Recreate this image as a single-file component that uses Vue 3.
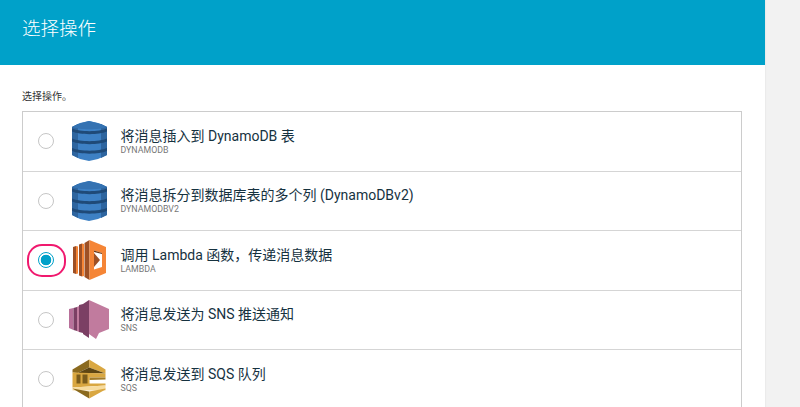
<script setup>
const rows = [
  { id: 'ddb', title: '将消息插入到 DynamoDB 表', sub: 'DYNAMODB', icon: 'ddb' },
  { id: 'ddb2', title: '将消息拆分到数据库表的多个列 (DynamoDBv2)', sub: 'DYNAMODBV2', icon: 'ddb' },
  { id: 'lambda', title: '调用 Lambda 函数，传递消息数据', sub: 'LAMBDA', icon: 'lambda', selected: true },
  { id: 'sns', title: '将消息发送为 SNS 推送通知', sub: 'SNS', icon: 'sns' },
  { id: 'sqs', title: '将消息发送到 SQS 队列', sub: 'SQS', icon: 'sqs' },
]
</script>

<template>
  <div class="page">
    <main class="panel">
      <header class="head">选择操作</header>
      <section class="body">
        <p class="hint">选择操作。</p>
        <div class="list">
          <div v-for="r in rows" :key="r.id" class="row">
            <span class="radio-wrap">
              <span class="radio" :class="{ on: r.selected }"></span>
              <span v-if="r.selected" class="ring"></span>
            </span>
            <svg class="icon" viewBox="0 0 36 40" aria-hidden="true">
              <template v-if="r.icon === 'ddb'">
                <path d="M1 6 L9 2 L18 0 L27 2 L36 6 V34 L27 38 L18 40 L9 38 L1 34Z" fill="#3d80c4"/>
                <path d="M1 6 L7 3 V37 L1 34Z" fill="#2e659f"/>
                <path d="M36 6 L30 3 V37 L36 34Z" fill="#2e659f"/>
                <path d="M7 3 L18 0 L30 3 L36 6 C28 9 9 9 1 6Z" fill="#3472b2"/>
                <path d="M1 7.5 C9 11 28 11 36 7.5 V10.5 C28 14 9 14 1 10.5Z" fill="#1f4a78"/>
                <path d="M1 17.5 C9 21 28 21 36 17.5 V20.5 C28 24 9 24 1 20.5Z" fill="#1f4a78"/>
                <path d="M1 27 C9 30.5 28 30.5 36 27 V30 C28 33.5 9 33.5 1 30Z" fill="#1f4a78"/>
              </template>
              <template v-else-if="r.icon === 'lambda'">
                <path d="M2 7 L5 6 V34 L2 33Z" fill="#9d5025"/>
                <path d="M5 6 L7 6.5 V33.5 L5 34Z" fill="#f58536"/>
                <path d="M8 4.5 L11 3.5 V36.5 L8 35.5Z" fill="#9d5025"/>
                <path d="M11 3.5 L13 4 V36 L11 36.5Z" fill="#f58536"/>
                <path d="M13.5 3 L18.5 0 V40 L13.5 37Z" fill="#9d5025"/>
                <path d="M18.5 0 L35 7 V33 L18.5 40Z" fill="#f58536"/>
                <path d="M23 10.5 L31 13 V27 L23 29.5Z" fill="#fff"/>
                <path d="M23 13 L29 20 L23 27Z" fill="#9d5025"/>
                <path d="M23 10.5 L31 13 V14 L23 12Z" fill="#6b3a19"/>
              </template>
              <template v-else-if="r.icon === 'sns'">
                <g transform="translate(-2 0)">
                  <path d="M0 9 L4.5 8 V30 L0 28Z" fill="#b8709a"/>
                  <path d="M4.5 8 L8 7 V31 L4.5 30Z" fill="#7b3f64"/>
                  <path d="M8 7 L10 6 V32 L8 31Z" fill="#c17b9e"/>
                  <path d="M10 5 L14 4 V33 L10 32Z" fill="#7b3f64"/>
                  <path d="M14 4 L20 0 V38 L14 34Z" fill="#7b3f64"/>
                  <path d="M20 0 L40 9 V29 L30 33 L27 39 L20 34Z" fill="#c17b9e"/>
                </g>
              </template>
              <template v-else>
                <g transform="translate(1.5 0.5)">
                  <path d="M0 10 L16.7 0 V8 L5 13.5 L0 13Z" fill="#8b6a1f"/>
                  <path d="M16.7 0 L33 10 V14 L16.7 8Z" fill="#d9a741"/>
                  <path d="M5 13.5 L16.7 8 L33 14 Z" fill="#5e4613"/>
                  <path d="M0 13 L33 14 V18 H17 V24 H33 V26 L0 28Z" fill="#d9a741"/>
                  <path d="M4 15 H8 V24 H4Z" fill="#7a5c1c"/>
                  <path d="M10 15 H15 V24 H10Z" fill="#7a5c1c"/>
                  <path d="M17 18 H33 V20 L17 20.5Z" fill="#a27c2a"/>
                  <path d="M0 28 L33 26 V31 L0 31Z" fill="#f7dc9f"/>
                  <path d="M0 29 L16.7 32 V39 Z" fill="#8b6a1f"/>
                  <path d="M16.7 32 L33 29 V30 L16.7 39Z" fill="#d9a741"/>
                </g>
              </template>
            </svg>
            <div class="txt">
              <div class="title">{{ r.title }}</div>
              <div class="sub">{{ r.sub }}</div>
            </div>
          </div>
        </div>
      </section>
    </main>
  </div>
</template>

<style scoped>
.page {
  width: 800px;
  height: 407px;
  overflow: hidden;
  background: #f2f2f2;
  font-family: Roboto, "Noto Sans CJK SC", sans-serif;
}
.panel {
  width: 765px;
  height: 407px;
  background: #fff;
  overflow: hidden;
  box-shadow: 1px 0 1px #ebebeb;
}
.head {
  height: 65px;
  padding: 17px 22px 0;
  box-sizing: border-box;
  background: #00a1c9;
  color: #fff;
  font-size: 18.5px;
  font-weight: 300;
  line-height: 24px;
}
.body {
  padding: 26px 23px 0 22px;
}
.hint {
  margin: 0 0 9px;
  font-size: 10px;
  line-height: 11px;
  color: #333;
}
.list {
  border: 1px solid #ccc;
  border-bottom: 0;
}
.row {
  height: 59.5px;
  box-sizing: border-box;
  display: flex;
  align-items: center;
  padding-left: 15px;
  border-bottom: 1px solid #d5d5d5;
}
.radio-wrap {
  position: relative;
  width: 16px;
  height: 16px;
  flex: none;
}
.radio {
  display: block;
  width: 16px;
  height: 16px;
  box-sizing: border-box;
  border: 1.5px solid #c6c6c6;
  border-radius: 50%;
  background: #fff;
}
.radio.on {
  border-color: #00a1c9;
  background: radial-gradient(circle, #00a1c9 0 5px, #fff 5.6px);
}
.ring {
  position: absolute;
  left: -11px;
  top: -8px;
  width: 39px;
  height: 33px;
  box-sizing: border-box;
  border: 2.5px solid #f0196e;
  border-radius: 15px;
}
.icon {
  width: 36px;
  height: 40px;
  flex: none;
  margin-left: 17px;
  overflow: visible;
}
.txt {
  margin-left: 13.5px;
}
.title {
  font-size: 14px;
  line-height: 17px;
  color: #16323f;
}
.sub {
  font-size: 8.8px;
  line-height: 10px;
  color: #777;
}
</style>
